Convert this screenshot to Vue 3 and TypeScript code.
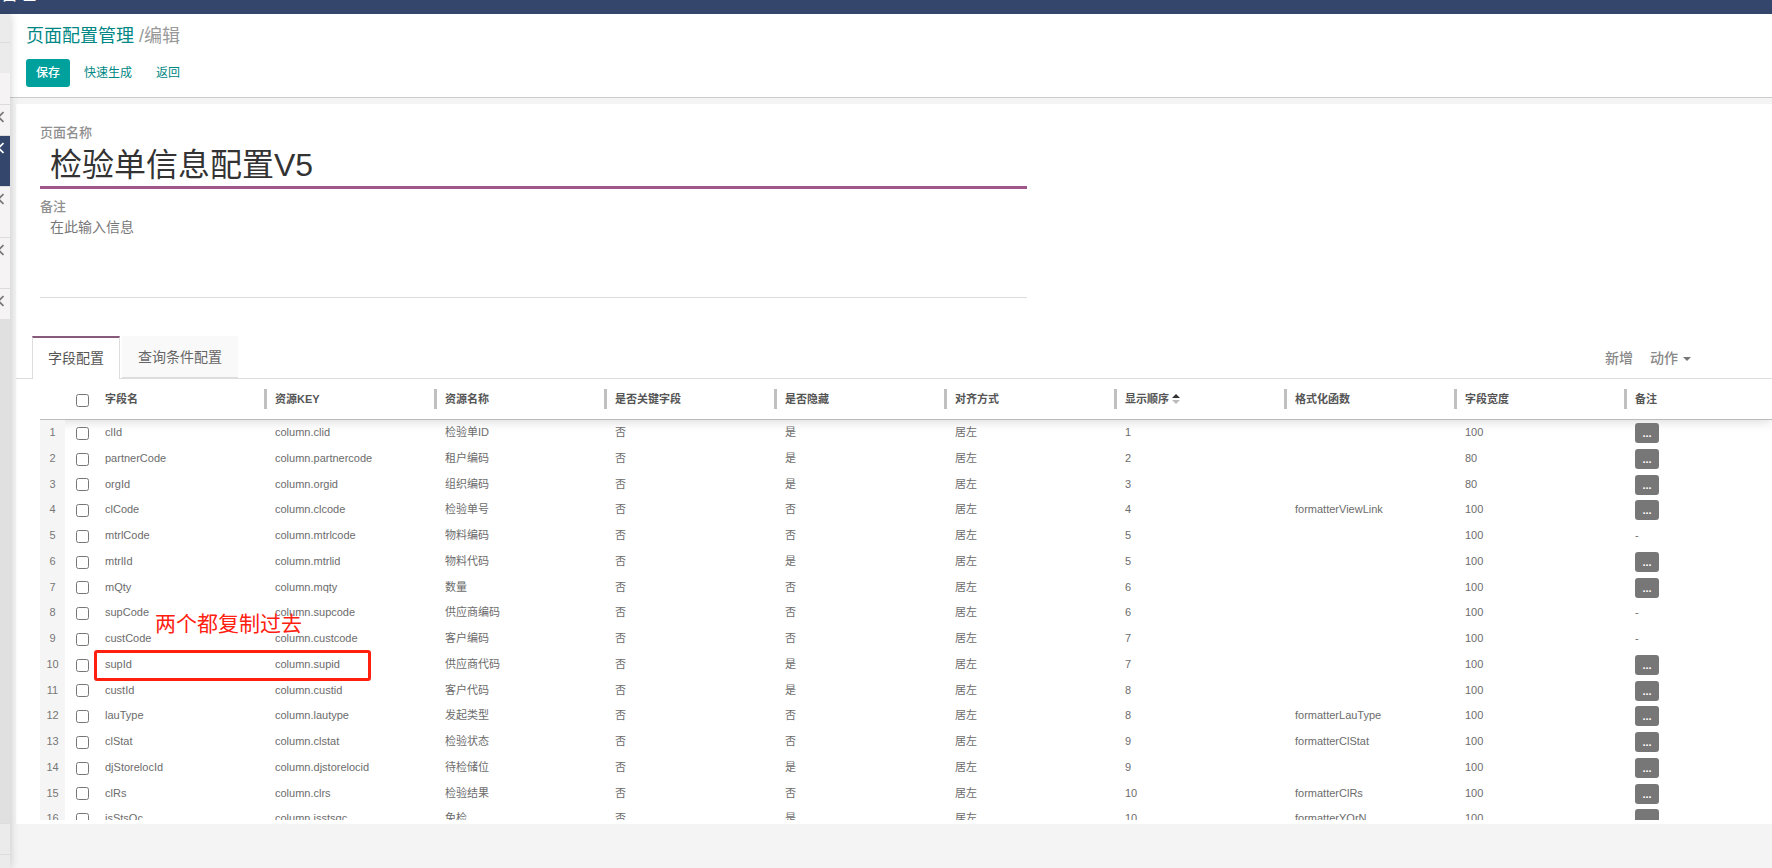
<script setup lang="ts">
import { ref } from 'vue'

interface Row {
  name: string
  key: string
  label: string
  primary: string
  hidden: string
  order: number
  formatter: string
  width: number
  remark: boolean
}

type Seed = [string, string, string, number, string, number, boolean]

const seeds: Seed[] = [
  ['clId', '检验单ID', '是', 1, '', 100, true],
  ['partnerCode', '租户编码', '是', 2, '', 80, true],
  ['orgId', '组织编码', '是', 3, '', 80, true],
  ['clCode', '检验单号', '否', 4, 'formatterViewLink', 100, true],
  ['mtrlCode', '物料编码', '否', 5, '', 100, false],
  ['mtrlId', '物料代码', '是', 5, '', 100, true],
  ['mQty', '数量', '否', 6, '', 100, true],
  ['supCode', '供应商编码', '否', 6, '', 100, false],
  ['custCode', '客户编码', '否', 7, '', 100, false],
  ['supId', '供应商代码', '是', 7, '', 100, true],
  ['custId', '客户代码', '是', 8, '', 100, true],
  ['lauType', '发起类型', '否', 8, 'formatterLauType', 100, true],
  ['clStat', '检验状态', '否', 9, 'formatterClStat', 100, true],
  ['djStorelocId', '待检储位', '是', 9, '', 100, true],
  ['clRs', '检验结果', '否', 10, 'formatterClRs', 100, true],
  ['isStsQc', '免检', '是', 10, 'formatterYOrN', 100, true],
]

const rows: Row[] = seeds.map(([name, label, hidden, order, formatter, width, remark]) => ({
  name,
  key: 'column.' + name.toLowerCase(),
  label,
  primary: '否',
  hidden,
  order,
  formatter,
  width,
  remark,
}))

const headers = ['字段名', '资源KEY', '资源名称', '是否关键字段', '是否隐藏', '对齐方式', '显示顺序', '格式化函数', '字段宽度', '备注']
const sideItems = ['tint', 'tint', 'short plain', 'short arrow', 'active arrow', 'arrow', 'arrow', 'short arrow', 'filler', 'foot', 'foot']
const pageName = ref('检验单信息配置V5')
const remark = ref('')
</script>

<template>
  <div class="app">
    <header class="navbar"><span>管理</span></header>
    <div class="body">
      <nav class="sidebar" aria-label="菜单">
        <div v-for="(item, i) in sideItems" :key="i" class="side-item" :class="item">
          <svg v-if="item.includes('arrow')" width="4" height="12" viewBox="0 0 4 12">
            <path d="M3.5 1L-1.5 6L3.5 11" fill="none" stroke="currentColor" stroke-width="1.6" />
          </svg>
        </div>
      </nav>
      <main class="main">
        <div class="control-panel">
          <div class="crumbs"><a href="#">页面配置管理</a> <span>/编辑</span></div>
          <div class="buttons">
            <button type="button" class="btn primary">保存</button>
            <button type="button" class="btn">快速生成</button>
            <button type="button" class="btn">返回</button>
          </div>
        </div>
        <div class="sheet">
          <div class="form-area">
            <div class="form">
              <label for="page-name">页面名称</label>
              <input id="page-name" v-model="pageName" type="text" class="name-input" />
              <label for="remark">备注</label>
              <textarea id="remark" v-model="remark" class="remark-input" placeholder="在此输入信息"></textarea>
            </div>
          </div>
          <div class="tabbar">
            <button type="button" class="tab current">字段配置</button>
            <button type="button" class="tab">查询条件配置</button>
            <div class="actions">
              <button type="button">新增</button>
              <button type="button">动作<i class="caret"></i></button>
            </div>
          </div>
          <div class="grid-box">
            <table>
              <colgroup>
                <col class="c-index" />
                <col class="c-check" />
                <col v-for="n in 9" :key="n" class="c-data" />
                <col />
              </colgroup>
              <thead>
                <tr>
                  <th></th>
                  <th class="check"><input type="checkbox" aria-label="全选" /></th>
                  <th v-for="(h, i) in headers" :key="h">
                    <div class="head" :class="{ last: i === headers.length - 1 }">
                      {{ h }}
                      <svg v-if="h === '显示顺序'" width="8" height="12" viewBox="0 0 8 12">
                        <path d="M0 5L4 1L8 5Z" fill="#333" />
                        <path d="M0 7L8 7L4 11Z" fill="#bbb" />
                      </svg>
                    </div>
                  </th>
                </tr>
              </thead>
              <tbody>
                <tr v-for="(r, i) in rows" :key="r.name">
                  <td class="index">{{ i + 1 }}</td>
                  <td class="check"><input type="checkbox" :aria-label="r.name" /></td>
                  <td><div v-if="r.name === 'supId'" class="mark"><p>两个都复制过去</p></div>{{ r.name }}</td>
                  <td>{{ r.key }}</td>
                  <td>{{ r.label }}</td>
                  <td>{{ r.primary }}</td>
                  <td>{{ r.hidden }}</td>
                  <td>居左</td>
                  <td>{{ r.order }}</td>
                  <td>{{ r.formatter }}</td>
                  <td>{{ r.width }}</td>
                  <td v-if="r.remark" class="control"><button type="button" class="more">...</button></td>
                  <td v-else>-</td>
                </tr>
              </tbody>
            </table>
          </div>
        </div>
      </main>
    </div>
  </div>
</template>

<style>
body {
  margin: 0;
  background: #f4f4f4;
}
</style>

<style scoped>
* {
  box-sizing: border-box;
}
.app {
  height: 100vh;
  display: flex;
  flex-direction: column;
  overflow: hidden;
  font-family: "Liberation Sans", "Noto Sans CJK SC", sans-serif;
  font-size: 14px;
  color: #666;
}
button,
input,
textarea {
  font-family: inherit;
  margin: 0;
}
button {
  border: 0;
  background: none;
  color: inherit;
  padding: 0;
}
.navbar {
  flex: none;
  height: 14px;
  overflow: hidden;
  background: #35466d;
  color: #fff;
  display: flex;
  align-items: flex-end;
  font-size: 18px;
  line-height: 24px;
}
.navbar span {
  height: 32px;
}
.body {
  flex: 1;
  display: flex;
  min-height: 0;
}
.sidebar {
  width: 10px;
  flex: none;
  display: flex;
  flex-direction: column;
  background: #f5f3f4;
  color: #777;
  box-shadow: 0 0 10px rgba(0, 0, 0, 0.2);
  position: relative;
  z-index: 1;
}
.side-item {
  flex: none;
  height: 51px;
  padding-top: 6px;
  border-top: 1px solid #dcdcdc;
}
.side-item svg {
  display: block;
}
.side-item.short,
.side-item.tint,
.side-item.foot {
  height: 31px;
}
.side-item.plain {
  border-top-color: #f5f3f4;
}
.side-item.tint,
.side-item.foot {
  background: #ebebeb;
}
.side-item.tint:first-child {
  height: 28px;
  border-top: 0;
}
.side-item.active {
  background: #35466d;
  color: #fff;
}
.side-item.filler {
  flex: 1;
  background: #e0e0e0;
  border: 0;
}
.side-item.foot:last-child {
  height: 14px;
}
.main {
  flex: 1;
  min-width: 0;
  background: #f4f4f4;
}
.control-panel {
  background: #fff;
  border-bottom: 1px solid #ccc;
  padding: 9px 16px 10px;
}
.crumbs {
  font-size: 18px;
  line-height: 26px;
  color: #999;
}
.crumbs a {
  color: #008784;
  text-decoration: none;
}
.buttons {
  display: flex;
  gap: 4px;
  padding-top: 10px;
}
.btn {
  height: 28px;
  padding: 0 10px;
  border-radius: 3px;
  font-size: 12px;
  line-height: 28px;
  color: #008784;
}
.btn.primary {
  background: #00a09d;
  color: #fff;
  font-weight: 500;
}
.sheet {
  margin: 6px 0 0 6px;
  background: #fff;
  padding: 19px 0 4px;
}
.form-area {
  margin-left: 24px;
}
.form {
  width: 57%;
  display: flex;
  flex-direction: column;
}
.form label {
  font-size: 13px;
  font-weight: 500;
  line-height: 20px;
  color: #8f8f8f;
}
.name-input {
  width: 100%;
  height: 46px;
  border: 0;
  border-bottom: 3px solid #a0558b;
  padding: 0 10px 5px;
  font-size: 32px;
  color: #333;
  outline: 0;
  margin-bottom: 8px;
  background: transparent;
}
.remark-input {
  height: 81px;
  border: 0;
  border-bottom: 1px solid #ddd;
  padding: 0 10px;
  font-size: 14px;
  line-height: 20px;
  outline: 0;
  resize: none;
  background: transparent;
}
.remark-input::placeholder {
  color: #777;
}
.tabbar {
  display: flex;
  gap: 2px;
  margin-top: 38px;
  height: 43px;
  padding-left: 16px;
  border-bottom: 1px solid #ddd;
}
.tab {
  height: 42px;
  padding: 0 16px 2px;
  font-size: 14px;
  background: #f9f9f9;
  border-bottom: 1px solid #ddd;
  color: #666;
}
.tab.current {
  height: 43px;
  padding: 0 15px 3px;
  background: #fff;
  border: 1px solid #ddd;
  border-top: 2px solid #875a7b;
  border-bottom: 0;
  color: #555;
}
.actions {
  margin-left: auto;
  margin-right: 81px;
  display: flex;
  gap: 17px;
  color: #888;
}
.actions button {
  display: flex;
  align-items: center;
  font-size: 14px;
  font-weight: 500;
}
.caret {
  margin: 3px 0 0 5px;
  border: 4px solid transparent;
  border-top-color: #777;
  border-bottom: 0;
}
.grid-box {
  margin-left: 24px;
  height: 441px;
  overflow: hidden;
}
table {
  width: 100%;
  table-layout: fixed;
  border-collapse: separate;
  border-spacing: 0;
  font-size: 11px;
}
.c-index {
  width: 25px;
}
.c-check {
  width: 32px;
}
.c-data {
  width: 170px;
}
thead {
  box-shadow: 0 2px 10px rgba(0, 0, 0, 0.14);
}
th {
  height: 41px;
  padding: 0;
  border-bottom: 1px solid #bbb;
  text-align: left;
  vertical-align: middle;
  color: #555;
}
.head {
  display: flex;
  align-items: center;
  gap: 3px;
  height: 20px;
  padding: 0 0 2px 8px;
  border-right: 3px solid #c0c0c0;
}
.head svg {
  margin-top: 2px;
}
.head.last {
  border-right: 0;
}
td {
  height: 26px;
  padding: 0 0 2px 8px;
  line-height: 16px;
  white-space: nowrap;
  vertical-align: middle;
  color: #6c6c6c;
}
td.control {
  padding-bottom: 0;
}
tr:nth-child(4n + 3) td {
  height: 25px;
}
td.index {
  padding: 0 0 2px;
  text-align: center;
  background: #f5f5f5;
  color: #777;
}
td.check,
th.check {
  padding: 0 0 0 11px;
}
th.check {
  padding-top: 3px;
}
.check input {
  display: block;
  width: 13px;
  height: 13px;
}
.more {
  display: block;
  width: 24px;
  height: 20px;
  border-radius: 3px;
  background: #777;
  color: #fff;
  font-size: 11px;
  font-weight: 700;
}
.mark {
  position: absolute;
  width: 277px;
  height: 31px;
  margin: -6px 0 0 -11px;
  border: 3px solid #ff2010;
  border-radius: 3px;
}
.mark p {
  position: absolute;
  left: 58px;
  bottom: 39px;
  margin: 0;
  font-size: 21px;
  line-height: 30px;
  color: #ff2010;
}
</style>
